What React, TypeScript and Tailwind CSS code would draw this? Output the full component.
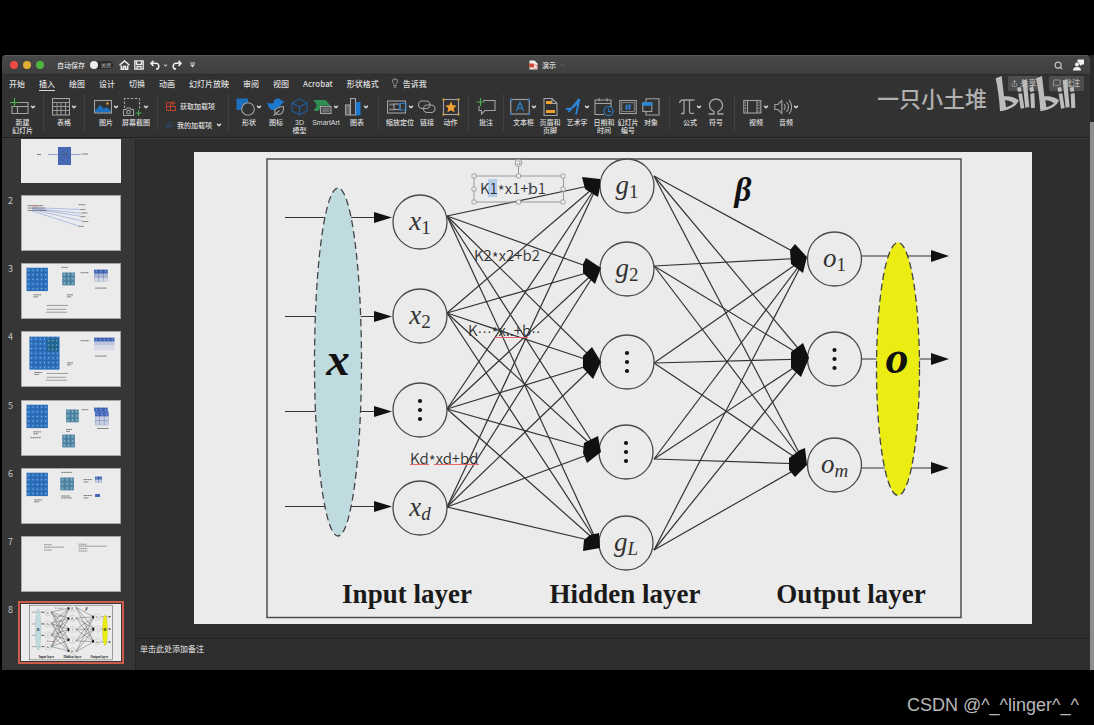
import React from "react";
import { ChevronDown, Search, Lightbulb, MessageSquare, Share } from "lucide-react";

type P = { children?: React.ReactNode };

const tabs = ["开始", "插入", "绘图", "设计", "切换", "动画", "幻灯片放映", "审阅", "视图", "Acrobat", "形状格式"];

const Ico = ({ w = 20, children }: P & { w?: number }) => (
  <svg width={w} height="18" viewBox={`0 0 ${w} 18`} fill="none" stroke="#a3a3a3" strokeWidth="1.1" aria-hidden="true" className="shrink-0">
    {children}
  </svg>
);

const Caret = () => <ChevronDown size={6} strokeWidth={6} className="shrink-0 text-[#dadada]" aria-hidden="true" />;

function Tool({ w, lines, caret, children }: P & { w: string; lines: string[]; caret?: boolean }) {
  return (
    <button type="button" className={`flex shrink-0 flex-col items-center gap-[3px] ${w}`}>
      <span className="flex h-[18px] items-center gap-px">
        {children}
        {caret && <Caret />}
      </span>
      <span className="font-['Liberation_Sans','Noto_Sans_CJK_SC',sans-serif] text-[7px] leading-[8px] font-medium whitespace-nowrap">
        {lines.map((l) => (
          <span key={l} className="block text-center">{l}</span>
        ))}
      </span>
    </button>
  );
}

const Group = ({ children }: P) => (
  <div className="flex h-[37px] shrink-0 border-r border-[#414141] px-[6px] pt-[4px] last:border-r-0">{children}</div>
);

function Ribbon() {
  return (
    <div className="flex h-[44px] items-start overflow-hidden border-b border-[#1f1f1f] bg-[#323232]">
      <Group>
        <Tool w="w-[29px]" lines={["新建", "幻灯片"]} caret>
          <Ico w={19}>
            <path d="M7 4.500h11v11H2V8M2 8.500h16M7.500 8.500v7" />
            <path d="M4.500 0v9M0 4.500h9" stroke="#4caf50" />
          </Ico>
        </Tool>
      </Group>
      <Group>
        <Tool w="w-[28px]" lines={["表格"]} caret>
          <Ico w={18}>
            <rect x="0.500" y="0.500" width="17" height="16.500" />
            <path d="M0.500 4.500h17M0.500 8.500h17M0.500 12.500h17M5 4.500v12.500M9 4.500v12.500M13.500 4.500v12.500" strokeWidth="0.900" />
          </Ico>
        </Tool>
      </Group>
      <Group>
        <Tool w="w-[30px]" lines={["图片"]} caret>
          <Ico w={18}>
            <path d="M1 13l5-6 4 4 2.500-2 4.500 4v1.500H1z" fill="#1d6fc0" stroke="none" />
            <rect x="0.500" y="2.500" width="17" height="12.500" />
            <circle cx="13.500" cy="5.500" r="1.200" fill="#e69a2d" stroke="none" />
          </Ico>
        </Tool>
        <Tool w="w-[30px]" lines={["屏幕截图"]} caret>
          <Ico w={19}>
            <path d="M1.500 10V0.500h15V12" strokeDasharray="2.500 1.500" />
            <path d="M0.500 11.500h2.500l1-1.500h3l1 1.500h2.500v6h-10z" />
            <circle cx="5.500" cy="14.200" r="1.800" />
            <path d="M15.500 12v6M12.500 15h6" stroke="#4caf50" />
          </Ico>
        </Tool>
      </Group>
      <Group>
        <div className="flex w-[58px] flex-col gap-[9px] pt-[3px] text-[7px] leading-[10px] font-medium whitespace-nowrap">
          <button type="button" className="flex items-center gap-[4px] pl-[2px]">
            <svg width="10" height="10" viewBox="0 0 10 10" fill="none" stroke="#c4402a" aria-hidden="true">
              <path d="M0.500 1.500h4v8h-4zM0.500 5.500h9v4h-5M4.500 5.500M7 0v4.500M4.800 2.200h4.700" />
            </svg>
            获取加载项
          </button>
          <button type="button" className="flex items-center gap-[4px] pl-[2px]">
            <svg width="10" height="10" viewBox="0 0 10 10" fill="none" stroke="#28568a" aria-hidden="true">
              <circle cx="6" cy="4" r="3.300" />
              <path d="M3 5.500L0.800 7v2.300h2.500L6 7.500" />
            </svg>
            我的加载项
            <Caret />
          </button>
        </div>
      </Group>
      <Group>
        <Tool w="w-[28px]" lines={["形状"]} caret>
          <Ico w={19}>
            <rect x="0.500" y="0.500" width="11.500" height="11.500" fill="#1d6fc0" stroke="none" />
            <circle cx="12" cy="11" r="6.300" fill="#323232" />
          </Ico>
        </Tool>
        <Tool w="w-[26px]" lines={["图标"]}>
          <Ico w={18}>
            <path d="M0.500 4.500c2 1 4 1.500 6 .5 0-3 2-4.500 4.500-4.500 2 0 3 1 3.500 2.500h2.500c0 2-1.500 2.500-2.500 3-1 2-2 3-4 4l-2 2.500C3.500 12.500.5 9 .5 4.500z" fill="#1d78cf" stroke="none" />
            <path d="M16.500 8.500c.5 5-1.500 8-5 8-3 0-4.500-2-3.500-4.500s4-3 8.500-3.500zM6.500 17.500l6-5" fill="#323232" />
          </Ico>
        </Tool>
        <Tool w="w-[21px]" lines={["3D", "模型"]}>
          <Ico w={17}>
            <path d="M8.500 1l7.500 4v8l-7.500 4L1 13V5zM1 5l7.500 4L16 5M8.500 9v8" stroke="#1f5f9f" />
          </Ico>
        </Tool>
        <Tool w="w-[32px]" lines={["SmartArt"]} caret>
          <Ico w={19}>
            <path d="M0.500 2h12l5 5.500h-9l-3 5.500h-5L4 7.500z" fill="#2f9150" stroke="none" />
            <rect x="7.500" y="8.500" width="10.500" height="7" fill="#4a4a4a" />
            <path d="M9.500 11h6.500M9.500 13h6.500" strokeWidth="0.800" />
          </Ico>
        </Tool>
        <Tool w="w-[30px]" lines={["图表"]} caret>
          <Ico w={17}>
            <rect x="0.500" y="7" width="4.500" height="10" fill="#666" />
            <rect x="5.500" y="0.500" width="5" height="16.500" />
            <rect x="10.800" y="4" width="4.700" height="13.500" fill="#1d78cf" stroke="none" />
          </Ico>
        </Tool>
      </Group>
      <Group>
        <Tool w="w-[30px]" lines={["缩放定位"]} caret>
          <Ico w={20}>
            <rect x="0.500" y="3" width="18" height="12" />
            <path d="M2 6.500h6M2 11.500h6" strokeWidth="2" stroke="#777" />
            <rect x="7" y="6" width="6" height="5.500" fill="#323232" />
            <rect x="12.500" y="5.500" width="6.500" height="6.500" stroke="#2b7cc9" />
          </Ico>
        </Tool>
        <Tool w="w-[24px]" lines={["链接"]}>
          <Ico w={18}>
            <rect x="0.500" y="3" width="11.500" height="7.500" rx="3.700" />
            <rect x="5.500" y="7" width="11.500" height="7.500" rx="3.700" />
          </Ico>
        </Tool>
        <Tool w="w-[23px]" lines={["动作"]}>
          <Ico w={18}>
            <rect x="1.500" y="1.500" width="15" height="15" />
            <path d="M9 3.500l1.700 3.700 4 .4-3 2.700.9 4L9 12.200l-3.600 2.100.9-4-3-2.700 4-.4z" fill="#f0a030" stroke="none" />
            <path d="M1.500 1.500h.01M16.500 1.500h.01M1.500 16.500h.01M16.500 16.500h.01" stroke="#e69a2d" strokeWidth="2" strokeLinecap="square" />
          </Ico>
        </Tool>
      </Group>
      <Group>
        <Tool w="w-[22px]" lines={["批注"]}>
          <Ico w={20}>
            <path d="M7 2.500h12v10H9L5.500 16v-3.500H3V8" />
            <path d="M4.500 0v8M0.500 4h8" stroke="#4caf50" />
          </Ico>
        </Tool>
      </Group>
      <Group>
        <Tool w="w-[27px]" lines={["文本框"]} caret>
          <Ico w={20}>
            <rect x="0.800" y="1.500" width="18.400" height="14.500" />
            <path d="M6.500 13L10 4.500l3.500 8.500M7.700 10.200h4.600" stroke="#2b8be0" />
            <path d="M1 1.500h.01M19 1.500h.01M1 16h.01M19 16h.01" stroke="#2b7cc9" strokeWidth="2" strokeLinecap="square" />
          </Ico>
        </Tool>
        <Tool w="w-[26px]" lines={["页眉和", "页脚"]}>
          <Ico w={15}>
            <path d="M1 0.500h8l5 5V17.500H1z" />
            <path d="M3 4.500h6M3 13.500h9" stroke="#f0a030" strokeWidth="3" />
            <path d="M9 0.500v5h5" />
          </Ico>
        </Tool>
        <Tool w="w-[28px]" lines={["艺术字"]} caret>
          <Ico w={18}>
            <path d="M1 10.500c4 2 11-3 13.500-9.500L11 16.500M14 1L3.500 14" stroke="#2b86d9" strokeWidth="1.800" />
          </Ico>
        </Tool>
        <Tool w="w-[26px]" lines={["日期和", "时间"]}>
          <Ico w={20}>
            <path d="M10 16.500H1V2h16v8M1 5.500h16M5 0v3.500M13 0v3.500" />
            <circle cx="14.500" cy="13" r="4.500" stroke="#2b7cc9" fill="#323232" />
            <path d="M14.500 10.500V13.500h2.500" stroke="#2b7cc9" />
          </Ico>
        </Tool>
        <Tool w="w-[22px]" lines={["幻灯片", "编号"]}>
          <Ico w={18}>
            <rect x="0.800" y="2.500" width="16.400" height="13" />
            <rect x="2.800" y="4.500" width="12.400" height="9" strokeWidth="0.700" />
            <path d="M8.300 6l-1 6M11 6l-1 6M6.300 8h6M6 10.200h6" stroke="#2b8be0" strokeWidth="0.900" />
          </Ico>
        </Tool>
        <Tool w="w-[24px]" lines={["对象"]}>
          <Ico w={18}>
            <path d="M4 4V0.800h13V17H4v-3" />
            <rect x="0.800" y="5" width="9" height="8.500" fill="#323232" />
            <path d="M0.300 6h10" stroke="#2b86d9" strokeWidth="3.500" />
          </Ico>
        </Tool>
      </Group>
      <Group>
        <Tool w="w-[28px]" lines={["公式"]} caret>
          <Ico w={16}>
            <path d="M0.500 5C1 2.500 2 2 4 2h11.500M5 2v13.500H2M10.500 2v12c0 1.500 2 2 4.500 1" strokeWidth="1.300" />
          </Ico>
        </Tool>
        <Tool w="w-[24px]" lines={["符号"]}>
          <Ico w={16}>
            <path d="M0.500 16H6v-2.500C3 12 1.500 10 1.500 7.500c0-4 3-6.500 6.500-6.500s6.500 2.500 6.500 6.500c0 2.500-1.500 4.500-4.500 6V16h5.500" strokeWidth="1.300" />
          </Ico>
        </Tool>
      </Group>
      <Group>
        <Tool w="w-[30px]" lines={["视频"]} caret>
          <Ico w={19}>
            <rect x="0.800" y="2.500" width="17" height="12.500" />
            <path d="M4.500 2.500v12.500M14 2.500v12.500" />
            <path d="M2.500 4v10M16 4v10" strokeDasharray="1.300 1.500" />
          </Ico>
        </Tool>
        <Tool w="w-[30px]" lines={["音频"]} caret>
          <Ico w={18}>
            <path d="M0.800 6.500h3l4-4v13l-4-4h-3zM10 6c1.500 2 1.500 4 0 6M12.500 4c2.500 3 2.500 7 0 10M15 2c3.500 4 3.500 10 0 14" />
          </Ico>
        </Tool>
      </Group>
    </div>
  );
}

function TitleBar() {
  return (
    <header className="flex h-[19px] items-center border-t border-[#5a5a5a] bg-linear-to-b from-[#484848] to-[#3e3e3e] text-[7px] font-medium">
      <div className="flex flex-1 items-center pl-[8px]">
        <div className="flex gap-[5px]">
          <button type="button" aria-label="关闭窗口" className="size-[8px] rounded-full bg-[#ee4b45]" />
          <button type="button" aria-label="最小化" className="size-[8px] rounded-full bg-[#dfae35]" />
          <button type="button" aria-label="最大化" className="size-[8px] rounded-full bg-[#4db53a]" />
        </div>
        <label className="ml-[13px] flex items-center gap-[5px] whitespace-nowrap">
          自动保存
          <input type="checkbox" role="switch" className="peer sr-only" />
          <span className="flex h-[8px] w-[23px] items-center gap-[3px] rounded-full bg-[#2a2a2a] text-[5px] text-[#a0a0a0]">
            <span className="size-[8px] rounded-full bg-[#ededed]" />
            关闭
          </span>
        </label>
        <div className="ml-[6px] flex items-center gap-[4px]">
          <button type="button" aria-label="主页">
            <svg width="11" height="10" viewBox="0 0 11 10" fill="none" stroke="#ececec" strokeWidth="1.500" aria-hidden="true">
              <path d="M0.500 5.300L5.500 0.900l5 4.400M2.300 5.500V9.300H4.500V6.500h2v2.800h2.200V5.500" />
            </svg>
          </button>
          <button type="button" aria-label="保存">
            <svg width="10" height="10" viewBox="0 0 10 10" fill="none" stroke="#ececec" strokeWidth="1.300" aria-hidden="true">
              <path d="M0.800 0.800h8.400v8.400H0.800zM2.500 1v3.300h5V1M3 9V6.500h4V9" />
            </svg>
          </button>
          <button type="button" aria-label="撤消" className="ml-[2px] flex items-center gap-[3px]">
            <svg width="10" height="10" viewBox="0 0 10 10" fill="none" stroke="#ececec" strokeWidth="1.500" aria-hidden="true">
              <path d="M3.500 0.700L0.900 3.300l2.600 2.600M1 3.300h5a2.800 2.800 0 0 1 0 5.700" />
            </svg>
            <ChevronDown size={5} strokeWidth={5} className="text-[#bdbdbd]" />
          </button>
          <button type="button" aria-label="恢复">
            <svg width="10" height="10" viewBox="0 0 10 10" fill="none" stroke="#ececec" strokeWidth="1.500" aria-hidden="true">
              <path d="M6.500 0.700l2.600 2.600-2.600 2.600M9 3.300H4A2.800 2.800 0 0 0 4 9" />
            </svg>
          </button>
          <button type="button" aria-label="自定义工具栏" className="ml-[4px]">
            <svg width="5" height="6" viewBox="0 0 5 6" fill="#d6d6d6" aria-hidden="true">
              <path d="M0 0.500h5v1H0zM0 2.500h5L2.500 5.500z" />
            </svg>
          </button>
        </div>
      </div>
      <h1 className="flex items-center gap-[4px]">
        <svg width="9" height="10" viewBox="0 0 9 10" aria-hidden="true">
          <path d="M0.500 0.500h5l3 3v6h-8z" fill="#f1eeee" />
          <path d="M0 3.500h5v4H0z" fill="#d14a3c" />
          <path d="M5.500 5a2 2 0 1 1-1 3" fill="none" stroke="#e07a6d" />
        </svg>
        演示
        <ChevronDown size={5} strokeWidth={3} className="text-[#888888]" />
      </h1>
      <div className="flex flex-1 items-center justify-end gap-[10px] pr-[6px]">
        <button type="button" aria-label="搜索">
          <Search size={9} strokeWidth={3} className="text-[#c4c4c4]" />
        </button>
        <button type="button" aria-label="帐户">
          <svg width="11" height="12" viewBox="0 0 11 12" fill="#f2f2f2" aria-hidden="true">
            <path d="M4.500 0.500H11v5H9L7.500 7 7 5.500H4.500z" />
            <circle cx="4" cy="5.500" r="2.200" stroke="#404040" strokeWidth="0.500" />
            <path d="M0 11.500c0-2.500 1.500-3.500 4-3.500s4 1 4 3.500z" />
          </svg>
        </button>
      </div>
    </header>
  );
}

function TabBar() {
  return (
    <nav className="flex h-[20px] items-center gap-[14px] border-t border-[#2b2b2b] bg-[#323232] pr-[6px] pb-[3px] pl-[7px] text-[8px] font-medium whitespace-nowrap">
      {tabs.map((t) => (
        <button
          key={t}
          type="button"
          className={t === "插入" ? "border-y border-t-transparent border-b-[#d8d8d8] leading-[13px]" : "border-y border-transparent leading-[13px]"}
        >
          {t}
        </button>
      ))}
      <button type="button" className="-ml-[3px] flex items-center gap-[3px] leading-[13px]">
        <Lightbulb size={10} strokeWidth={2} className="text-[#b5b5b5]" />
        告诉我
      </button>
      <div className="ml-auto flex gap-[10px] text-[#bdbdbd]">
        <button type="button" className="flex h-[15px] w-[31px] items-center justify-center gap-[3px] rounded-[2px] bg-[#4e4e4e]">
          <Share size={7} />
          共享
        </button>
        <button type="button" className="flex h-[15px] w-[35px] items-center justify-center gap-[3px] rounded-[2px] bg-[#4e4e4e]">
          <MessageSquare size={8} />
          批注
        </button>
      </div>
    </nav>
  );
}

const inputs = [
  { y: 222, line: 217.5, out: 216, sub: "1", it: false },
  { y: 316, line: 316.5, out: 313, sub: "2", it: false },
  { y: 410, line: 411.5, out: 409, sub: "", it: false },
  { y: 508, line: 506.5, out: 507, sub: "d", it: true },
];
const hidden = [
  { x: 627, y: 186, out: 176, tip: [598, 184], sub: "1", it: false, fan: "582,177 600,179 600,187 598,197 585,189" },
  { x: 627, y: 269, out: 266, tip: [597, 270], sub: "2", it: false, fan: "586,258 601,268 595,284 583,273 583,264" },
  { x: 627, y: 362, out: 363, tip: [597, 363], sub: "", it: false, fan: "592,347 601,362 593,379 583,368 583,356" },
  { x: 626, y: 452, out: 459, tip: [598, 451], sub: "", it: false, fan: "598,436 601,452 587,463 583,453 584,443" },
  { x: 626, y: 543, out: 550, tip: [597, 542], sub: "L", it: true, fan: "599,533 600,548 583,551 584,540 590,535" },
];
const outputs = [
  { y: 259, line: 256, tip: [805, 258], sub: "1", it: false, fan: "795,244 807,257 803,273 791,264 790,250" },
  { y: 359, line: 359, tip: [807, 359], sub: "", it: false, fan: "803,343 809,358 801,377 791,368 791,352" },
  { y: 465, line: 468, tip: [805, 464], sub: "m", it: true, fan: "805,448 807,465 795,477 789,470 789,458 800,450" },
];

function Neuron({ x, y, name, sub, it }: { x: number; y: number; name: string; sub: string; it: boolean }) {
  return (
    <g>
      <circle cx={x} cy={y} r="27" fill="#ebebeb" stroke="#4a4a4a" strokeWidth="1.300" />
      {sub ? (
        <text x={x} y={y + 8} textAnchor="middle" fontSize="27" fontStyle="italic" fill="#333333">
          {name}
          <tspan dy="4" fontSize="19" fontStyle={it ? "italic" : "normal"}>{sub}</tspan>
        </text>
      ) : (
        [-9, 0, 9].map((d) => <circle key={d} cx={x} cy={y + d} r="2.100" fill="#111111" />)
      )}
    </g>
  );
}

function Formula({ x, y, left, right }: { x: number; y: number; left: React.ReactNode; right: React.ReactNode }) {
  return (
    <text x={x} y={y} fontSize="15" fontWeight="350" fill="#333333" fontFamily="'Noto Sans CJK SC', 'Open Sans', sans-serif">
      {left}
      <tspan dy="3">*</tspan>
      <tspan dy="-3">{right}</tspan>
    </text>
  );
}

const Dots = ({ children }: P) => <tspan fontFamily="'Liberation Sans', sans-serif" fontSize="14">{children}</tspan>;

function Diagram({ editing }: { editing?: boolean }) {
  return (
    <svg viewBox="194 152 838 472" className="block h-full w-full" fontFamily="'Liberation Serif', serif" role="img" aria-label="Neural network">
      <rect x="267" y="159" width="694" height="458.500" fill="none" stroke="#444444" strokeWidth={editing ? 1.4 : 4} />
      <g stroke="#333333" strokeWidth={editing ? 1.2 : 3}>
        {inputs.map((a) => (
          <line key={a.y} x1="285" y1={a.line} x2="380" y2={a.line} />
        ))}
        {outputs.map((a) => (
          <line key={a.y} x1="861" y1={a.line} x2="936" y2={a.line} />
        ))}
        {inputs.flatMap((a) => hidden.map((b) => <line key={`${a.y}-${b.y}`} x1="447" y1={a.out} x2={b.tip[0]} y2={b.tip[1]} />))}
        {hidden.flatMap((a) => outputs.map((b) => <line key={`${a.y}-${b.y}`} x1="654" y1={a.out} x2={b.tip[0]} y2={b.tip[1]} />))}
      </g>
      <g fill="#111111">
        {inputs.map((a) => (
          <path key={a.y} d={`M374 ${a.line - 5.5}L392 ${a.line}L374 ${a.line + 5.5}z`} />
        ))}
        {outputs.map((a) => (
          <path key={a.y} d={`M931 ${a.line - 6}L949 ${a.line}L931 ${a.line + 6}z`} />
        ))}
      </g>
      <ellipse cx="338" cy="362" rx="23.500" ry="174" fill="#c0dbdf" stroke="#444444" strokeWidth="1.300" strokeDasharray="7 4" />
      <ellipse cx="898" cy="369" rx="21.500" ry="126.500" fill="#eaec12" stroke="#444444" strokeWidth="1.300" strokeDasharray="7 4" />
      {inputs.map((n) => <Neuron key={n.y} x={420} y={n.y} name="x" sub={n.sub} it={n.it} />)}
      {hidden.map((n) => <Neuron key={n.y} x={n.x} y={n.y} name="g" sub={n.sub} it={n.it} />)}
      {outputs.map((n) => <Neuron key={n.y} x={834.5} y={n.y} name="o" sub={n.sub} it={n.it} />)}
      <g fill="#111111">
        {hidden.map((b) => <polygon key={b.y} points={b.fan} />)}
        {outputs.map((b) => <polygon key={b.y} points={b.fan} />)}
      </g>
      <g fill="#111111" fontWeight="bold" textAnchor="middle">
        <text x="338" y="375" fontSize="47" fontStyle="italic">x</text>
        <text x="897" y="373" fontSize="46" fontStyle="italic">o</text>
        <text x="743" y="201" fontSize="33" fontStyle="italic">β</text>
        <g fontSize="27" fill="#1a1a1a">
          <text x="407" y="603">Input layer</text>
          <text x="625" y="603">Hidden layer</text>
          <text x="851" y="603">Output layer</text>
        </g>
      </g>
      {editing && (
        <g>
          <rect x="474" y="176" width="89.500" height="26" fill="none" stroke="#9a9a9a" strokeWidth="1" />
          <path d="M518.500 166v10" stroke="#9a9a9a" />
          <rect x="488" y="179" width="9" height="18" fill="#b4cdea" />
        </g>
      )}
      <Formula x={480} y={194} left="K1" right="x1+b1" />
      <Formula x={474} y={261} left="K2" right="x2+b2" />
      <Formula x={468} y={336} left={<>K<Dots>···</Dots></>} right={<>x..+b<Dots>··</Dots></>} />
      <Formula x={410} y={464} left="Kd" right="xd+bd" />
      <path d="M494 337.500h34M410 464.500h19M434 464.500h45" fill="none" stroke="#e2686a" strokeWidth="1.200" />
      {editing && (
        <g fill="#f2f2f2" stroke="#a0a0a0" strokeWidth="1">
          {[474, 518.5, 563].flatMap((x) =>
            [176, 189, 202].filter((y) => !(x === 518.5 && y === 189)).map((y) => <rect key={`${x}-${y}`} x={x - 2} y={y - 2} width="4" height="4" rx="0.800" />)
          )}
          <circle cx="518.500" cy="163" r="3.500" />
          <path d="M516.800 163a1.700 1.700 0 1 0 1.700-1.700" fill="none" stroke="#777777" strokeWidth="0.800" />
          <path d="M528 183.500h3M528 194h3M529.500 184v10" stroke="#666666" strokeWidth="0.700" />
        </g>
      )}
    </svg>
  );
}

function Matrix({ x, y, w, h, n, m = n, fill }: { x: number; y: number; w: number; h: number; n: number; m?: number; fill: string }) {
  const cells = Array.from({ length: n * m }, (_, i) => [i % n, Math.floor(i / n)]);
  const cw = w / n;
  const ch = h / m;
  return (
    <g>
      <rect x={x} y={y} width={w} height={h} fill={fill} />
      {cells.map(([c, r]) => (
        <g key={`${c}-${r}`}>
          <rect x={x + c * cw} y={y + r * ch} width={cw} height={ch} fill="none" stroke="#1c4f94" strokeOpacity="0.450" strokeWidth="0.300" />
          <rect x={x + c * cw + cw / 2 - 0.5} y={y + r * ch + ch / 2 - 0.5} width="1" height="1" fill="#d6e2f0" fillOpacity="0.800" />
        </g>
      ))}
    </g>
  );
}

const Scribble = ({ d, c = "#777777" }: { d: string; c?: string }) => (
  <path d={d} stroke={c} strokeWidth="1" strokeDasharray="1.800 0.300" strokeOpacity="0.800" fill="none" />
);

const Mini = ({ children }: P) => (
  <svg viewBox="0 0 100 56" className="block h-full w-full" aria-hidden="true">
    {children}
  </svg>
);

const thumbs: React.ReactNode[] = [
  <Mini key="1">
    <rect x="37" y="20" width="13" height="18" fill="#4468b4" />
    <path d="M27 27.500h10M50 27.500h10" stroke="#8094c8" strokeWidth="0.800" />
    <Scribble d="M16 27.500h4M61 27h6M40 27.500h7" c="#555555" />
  </Mini>,
  <Mini key="2">
    <path d="M10 12L60 14M10 13L61 18M10 13L60 21M10 14L62 26M8 15L58 31" stroke="#8fa6dc" strokeWidth="0.700" />
    <Scribble d="M5 10h16M5 12.500h18M5 15h20M58 9h7M60 14h5M61 17.500h6M60 21.500h5M62 26.500h6M58 31.500h5" c="#555555" />
    <path d="M9 10.300h7" stroke="#d96a6a" strokeWidth="0.700" />
  </Mini>,
  <Mini key="3">
    <Matrix x={4} y={4} w={22} h={24} n={5} fill="#2f74c0" />
    <Matrix x={41} y={9} w={13} h={13} n={3} fill="#5a8fa8" />
    <Matrix x={74} y={6} w={14} h={4} n={3} m={1} fill="#3f63b5" />
    <Matrix x={74} y={10} w={14} h={4} n={3} m={1} fill="#aab2d2" />
    <Matrix x={74} y={14} w={14} h={4} n={3} m={1} fill="#d3d6e4" />
    <Scribble d="M40 3.500h7M46 32h6M11 32h8M11 34h5M46 34h4M60 9h8M75 25h12" c="#555555" />
    <Scribble d="M25 43h22M25 47h20M24 50h22" />
  </Mini>,
  <Mini key="4">
    <Matrix x={7} y={5} w={31} h={34} n={7} fill="#2f74c0" />
    <Matrix x={25} y={7} w={12} h={13} n={3} fill="#256a90" />
    <Matrix x={74} y={6} w={21} h={4} n={5} m={1} fill="#3f63b5" />
    <rect x="74" y="10" width="21" height="4" fill="#bcc3de" />
    <rect x="74" y="14" width="21" height="5" fill="#d7dae8" />
    <Scribble d="M12 42h8M12 44h5M46 32h6M46 34h4M60 9h9M75 25h12" c="#555555" />
    <Scribble d="M25 43h22M25 47h20M24 50h22" />
  </Mini>,
  <Mini key="5">
    <Matrix x={4} y={4} w={22} h={24} n={5} fill="#2f74c0" />
    <Matrix x={45} y={9} w={13} h={13} n={3} fill="#5a8fa8" />
    <Matrix x={41} y={35} w={13} h={13} n={3} fill="#5a8fa8" />
    <Matrix x={74} y={7} w={14} h={4} n={3} m={1} fill="#3f63b5" />
    <Matrix x={75} y={11} w={14} h={5} n={3} m={1} fill="#4a6bc0" />
    <Matrix x={75} y={16} w={14} h={9} n={3} m={2} fill="#c6cbe0" />
    <Scribble d="M11 32h8M11 34h5M8 38h11M45 29.500h6M45 31.500h4M61 9h7M77 28.500h12" c="#555555" />
  </Mini>,
  <Mini key="6">
    <Matrix x={4} y={4} w={22} h={24} n={5} fill="#2f74c0" />
    <Matrix x={39} y={9} w={14} h={13} n={3} fill="#5a8fa8" />
    <Matrix x={75} y={8} w={7} h={3} n={2} m={1} fill="#3f63b5" />
    <Matrix x={75} y={11} w={7} h={3} n={2} m={1} fill="#c0c6e0" />
    <rect x="75" y="26" width="5" height="3" fill="#3f63b5" />
    <Scribble d="M40 3.500h11M12 32h8M12 34h5M40 28h9M40 30h11M63 11h9M63 13.500h5M63 27.500h9M63 30h5" c="#555555" />
  </Mini>,
  <Mini key="7">
    <Scribble d="M22 8h8M22 10.500h21M22 13.500h8M58 7.500h8M58 9.500h29M58 12h9M58 14.500h9" />
  </Mini>,
  <Diagram key="8" />,
];

function SlideList() {
  return (
    <ol className="flex w-[134px] shrink-0 flex-col justify-between border-r border-[#262626] bg-[#363636] pb-[9px]">
      {thumbs.map((t, i) => (
        <li key={i} className="flex">
          <span className="w-[19px] pl-[6px] text-[9px] leading-[11px] text-[#c4c4c4]">{i > 0 ? i + 1 : ""}</span>
          <button
            type="button"
            aria-label={`幻灯片 ${i + 1}`}
            className={
              i === 0
                ? "flex h-[44px] w-[100px] items-end overflow-hidden bg-[#ebebeb]"
                : i === 7
                  ? "h-[57px] w-[100px] bg-[#ebebeb] outline-2 outline-offset-1 outline-[#cf5c4b]"
                  : "h-[56px] w-[100px] border border-[#a6a6a6] bg-[#ebebeb]"
            }
          >
            {i === 0 ? <span className="block h-[56px] w-full shrink-0">{t}</span> : t}
          </button>
        </li>
      ))}
    </ol>
  );
}

function Watermark() {
  return (
    <div className="pointer-events-none absolute top-[20px] right-[13px] flex items-end gap-[8px]">
      <span className="text-[22px] leading-[30px] font-medium whitespace-nowrap text-[#b0b0b0]">一只小土堆</span>
      <svg width="82" height="37" viewBox="585 75 246 111" fill="#bcbcbc" role="img" aria-label="bilibili">
        {[0, 121].map((dx) => (
          <g key={dx} transform={`translate(${dx} 0)`}>
            <path fillRule="evenodd" d="M587 85L605 78L612 139C630 137 648 143 656 151C652 166 630 180 600 184C598 150 594 118 587 85zM615 150L618 172C628 169 636 165 641 160C634 154 625 151 615 150z" />
            <path d="M651 113l11-2 3 13-11 2zM655 131l11-1 7 44-11 2zM667 91l13-2 8 82-12 2zM688 113l12-3 2 14-11 2zM691 131l12-2 2 44-12 2z" />
          </g>
        ))}
      </svg>
    </div>
  );
}

export default function App() {
  return (
    <div className="flex min-h-screen flex-col bg-black pt-[55px] font-['Noto_Sans_CJK_SC','Liberation_Sans',sans-serif] text-[#dedede]">
      <div className="flex pl-[2px]">
        <div className="relative min-w-0 flex-1 overflow-hidden rounded-t-[4px] bg-[#2e2e2e]">
          <TitleBar />
          <TabBar />
          <Ribbon />
          <Watermark />
          <div className="flex border-t border-[#3a3a3a]">
            <SlideList />
            <main className="min-w-0 flex-1">
              <div className="px-[58px] pt-[13px] pb-[14px]">
                <div className="aspect-[838/472] bg-[#ebebeb]">
                  <Diagram editing />
                </div>
              </div>
              <textarea
                aria-label="备注"
                placeholder="单击此处添加备注"
                rows={1}
                className="block h-[32px] w-full resize-none border-t border-[#222222] bg-transparent px-[4px] pt-[4px] text-[8px] leading-[11px] font-medium placeholder:text-[#cccccc]"
              />
            </main>
          </div>
        </div>
        <div className="flex w-[4px] flex-col bg-[#8d8d8d]">
          <div className="h-[67px] bg-[#292929]" />
        </div>
      </div>
      <footer className="flex flex-1 items-center justify-end pt-[15px] pr-[15px] font-['Liberation_Sans',sans-serif] text-[18px] text-[#b8b8b8]">CSDN @^_^linger^_^</footer>
    </div>
  );
}
